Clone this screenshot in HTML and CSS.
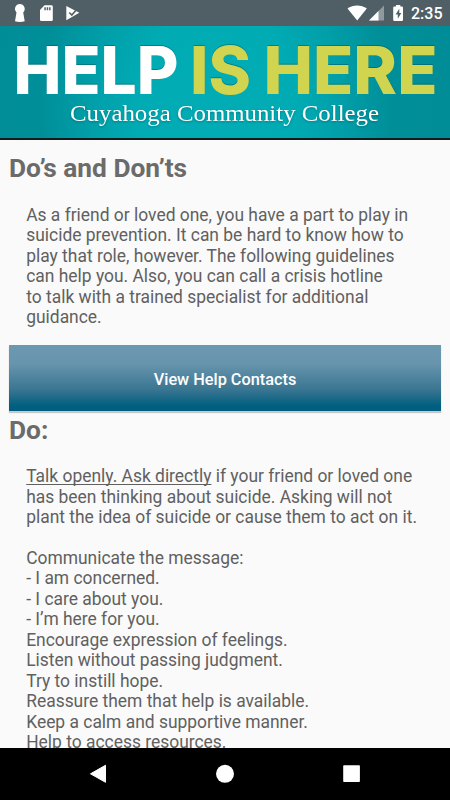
FILE: index.html
```html
<!DOCTYPE html>
<html lang="en">
<head>
  <meta charset="UTF-8">
  <meta name="viewport" content="width=device-width, initial-scale=1.0">
  <title>Help Is Here</title>
  <link rel="stylesheet" href="styles.css">
</head>
<body>
  <!-- Status bar -->
  <div class="status-bar">
    <svg class="status-icons" width="90" height="26" viewBox="0 0 90 26" fill="#fff">
      <path d="M19.8 4a4.9 4.9 0 0 1 3.4 8.4l1.5 8.9c-2.8 1-7 1-9.7 0l1.5-8.9A4.9 4.9 0 0 1 19.8 4z"/>
      <path fill-rule="evenodd" d="M44.5 5.3H51.5q1.3 0 1.3 1.3V19.7q0 1.3-1.3 1.3H41.3q-1.3 0-1.3-1.3V10zM44.3 7.2v3h1.5v-3zM46.7 7.2v3h1.5v-3zM49.1 7.2v3h1.5v-3z"/>
      <path d="M66.3 6l13 6.8-13 7.4z"/>
      <path d="M69.3 12.5l2.5 2.5 6.2-7" fill="none" stroke="#505f66" stroke-width="1.6"/>
    </svg>
    <svg class="status-icons" width="66" height="26" viewBox="345 0 66 26" fill="#fff">
      <path d="M347.5 8.6c5.5-4.3 13.8-4.3 19.3 0L357.2 20.6z"/>
      <path fill="#8f999e" d="M384 5.5V20.5H369z"/>
      <path d="M378.5 11V20.5H369z"/>
      <path fill-rule="evenodd" d="M396 5h4.3v1.5h1.5q1.2 0 1.2 1.2V19.8q0 1.2-1.2 1.2h-7.4q-1.2 0-1.2-1.2V7.7q0-1.2 1.2-1.2h1.6zM399.3 8.8l-3.7 5.6h2.2v4.4l3.5-5.8h-2z"/>
    </svg>
    <span class="time">2:35</span>
  </div>

  <!-- Banner -->
  <header class="banner">
    <svg width="450" height="112" viewBox="0 26 450 112">
      <g class="banner-title">
        <text x="13.5" y="94" textLength="165" lengthAdjust="spacingAndGlyphs">HELP</text>
        <text class="accent" x="190" y="94" textLength="61" lengthAdjust="spacingAndGlyphs">IS</text>
        <text class="accent" x="263.5" y="94" textLength="174" lengthAdjust="spacingAndGlyphs">HERE</text>
      </g>
      <text class="banner-subtitle" x="70" y="120.5" textLength="309" lengthAdjust="spacingAndGlyphs">Cuyahoga Community College</text>
    </svg>
  </header>

  <main class="content">
    <h1>Do’s and Don’ts</h1>
    <p class="intro">
      As a friend or loved one, you have a part to play in<br>
      suicide prevention. It can be hard to know how to<br>
      play that role, however. The following guidelines<br>
      can help you. Also, you can call a crisis hotline<br>
      to talk with a trained specialist for additional<br>
      guidance.
    </p>
    <button class="contacts-button">View Help Contacts</button>
    <h1 class="do-title">Do:</h1>
    <p class="do-list">
      <u>Talk openly. Ask directly</u> if your friend or loved one<br>
      has been thinking about suicide. Asking will not<br>
      plant the idea of suicide or cause them to act on it.<br>
      <br>
      Communicate the message:<br>
      - I am concerned.<br>
      - I care about you.<br>
      - I’m here for you.<br>
      Encourage expression of feelings.<br>
      Listen without passing judgment.<br>
      Try to instill hope.<br>
      Reassure them that help is available.<br>
      Keep a calm and supportive manner.<br>
      Help to access resources.
    </p>
  </main>

  <!-- Navigation bar -->
  <nav class="nav-bar">
    <svg width="450" height="52" viewBox="0 748 450 52" fill="#fff">
      <path d="M105.5 765.3v17l-15-8.5z" stroke="#fff" stroke-width="1" stroke-linejoin="round"/>
      <circle cx="225" cy="773.8" r="9"/>
      <rect x="343.2" y="765.3" width="16.7" height="16.7" rx="0.8"/>
    </svg>
  </nav>
</body>
</html>
```
FILE: styles.css
```css
body {
  margin: 0;
  width: 450px;
  height: 800px;
  display: flex;
  flex-direction: column;
  overflow: hidden;
  background-color: #fafafa;
  color: #606060;
  font-family: Roboto, sans-serif;
}
svg {
  display: block;
}
.status-bar {
  display: flex;
  flex: none;
  height: 26px;
  justify-content: space-between;
  background-color: #505f66;
  color: white;
}
.status-bar .status-icons:nth-child(2) {
  margin-left: auto;
}
.time {
  width: 39px;
  font-size: 16px;
  font-weight: 500;
  line-height: 28px;
  white-space: nowrap;
}
.banner {
  flex: none;
  height: 112px;
  border-bottom: 2px solid #101c1c;
  background: radial-gradient(ellipse 250px 330px at 48% 75%, #00acb5 0%, #00abb4 32%, #009fa9 50%, #008f99 70%, #008c96 100%);
}
.banner-title {
  font-family: Inter, sans-serif;
  font-size: 66px;
  font-weight: 800;
  fill: white;
  filter: drop-shadow(0 -1px 0 rgba(0, 70, 75, 0.4));
}
.banner-title .accent {
  fill: #d0d44f;
}
.banner-subtitle {
  font-family: "Liberation Serif", serif;
  font-size: 24px;
  fill: white;
  filter: drop-shadow(0 1px 1px rgba(0, 60, 65, 0.4));
}
.content {
  flex: 1;
  min-height: 0;
  overflow: hidden;
  padding: 0 9px;
}
h1 {
  margin: 13px 0 0;
  font-size: 26.3px;
  font-weight: 700;
  line-height: 31px;
  color: #6b6b6b;
}
p {
  margin: 0 0 0 17.2px;
  font-size: 17.43px;
  line-height: 20.45px;
  white-space: nowrap;
}
.intro {
  margin-top: 21px;
}
.contacts-button {
  display: block;
  width: 432px;
  height: 66px;
  margin-top: 17px;
  padding: 3px 0 0;
  border: none;
  background: linear-gradient(#6c98b0 0%, #6895ad 28%, #397591 68%, #005f80 92%, #005f80 100%);
  box-shadow: 0 2px 1px rgba(0, 0, 0, 0.2);
  color: white;
  font-family: Roboto, sans-serif;
  font-size: 16.3px;
  font-weight: 500;
}
.do-title {
  margin-top: 4px;
}
.do-list {
  margin-top: 20.4px;
}
u {
  text-decoration-thickness: 1px;
  text-decoration-skip-ink: none;
  text-underline-offset: 2px;
}
.nav-bar {
  flex: none;
  height: 52px;
  background-color: black;
}
```
